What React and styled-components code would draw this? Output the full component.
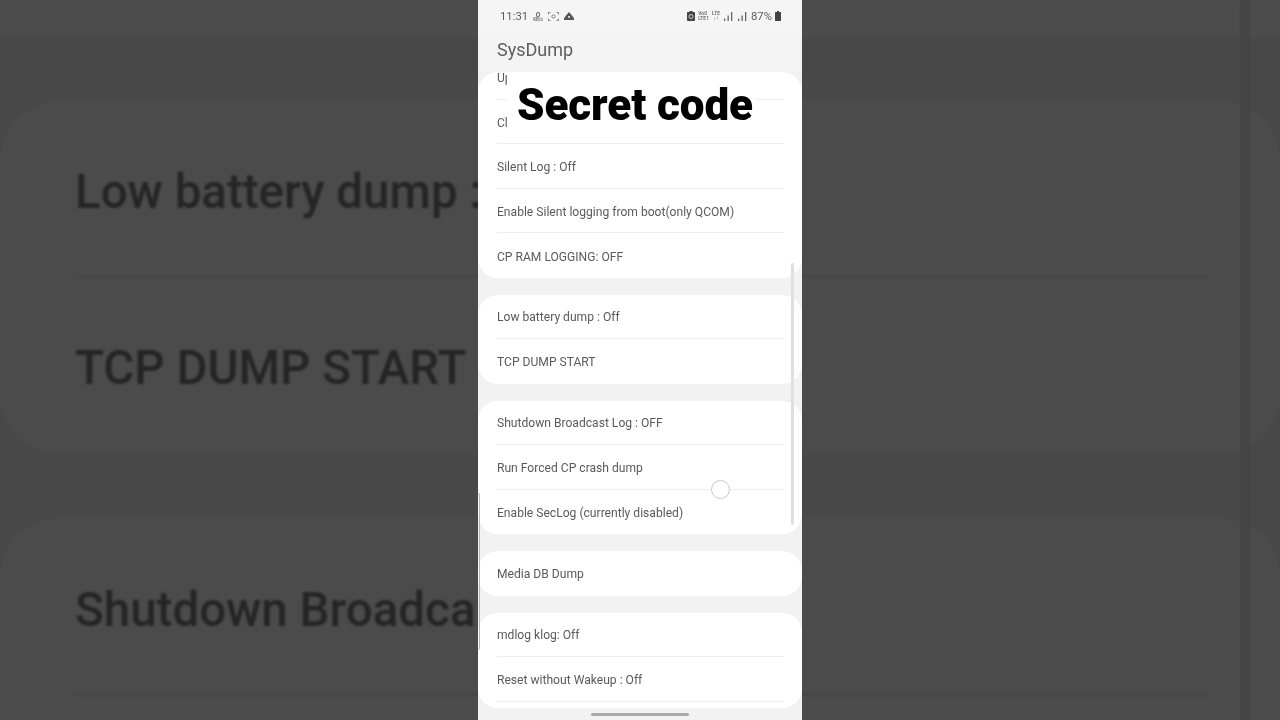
import styled, { createGlobalStyle } from 'styled-components';

const GlobalStyle = createGlobalStyle`
  html, body {
    margin: 0;
    padding: 0;
    background: #4b4b4b;
    overflow: hidden;
  }
`;

const Stage = styled.div`
  display: flex;
  width: 1280px;
  height: 720px;
  overflow: hidden;
  font-family: Roboto, sans-serif;
`;

// blurred, zoomed copy of the screen at each side of the video
const Side = styled.div`
  position: relative;
  flex: 1;
  min-width: 0;
  overflow: hidden;
  background: #484848;
`;

const SideTop = styled.div`
  height: 37px;
  margin-bottom: 64px;
  background: #4c4c4c;
`;

const SideCard = styled.div`
  height: ${(p) => p.$height}px;
  margin-bottom: 64px;
  background: #4b4b4b;
  border-radius: ${(p) => (p.$side === 'left' ? '60px 0 0 60px' : '0 60px 60px 0')};
`;

const SideRow = styled.div`
  display: flex;
  align-items: center;
  height: ${(p) => p.$height}px;
  padding-top: ${(p) => p.$shift || 0}px;
  margin: ${(p) => (p.$side === 'left' ? '0 0 0 75px' : '0 72px 0 0')};
  border-bottom: ${(p) => (p.$line ? '2px solid #444' : 'none')};
  box-sizing: border-box;
  color: #252525;
  font-size: 47.5px;
  font-weight: 500;
  white-space: nowrap;
  filter: blur(1.3px);
`;

const SideBar = styled.div`
  position: absolute;
  top: 0;
  bottom: 0;
  right: 30px;
  width: 10px;
  background: #444;
  filter: blur(1px);
`;

const Phone = styled.div`
  position: relative;
  flex: 0 0 324px;
  height: 720px;
  overflow: hidden;
  background: #f2f2f2;
  filter: blur(0.3px);
`;

const StatusBar = styled.div`
  display: flex;
  align-items: center;
  justify-content: space-between;
  height: 27px;
  padding: 5px 21px 0 22px;
  box-sizing: border-box;
  background: #f5f5f5;
  color: #5c5c5c;
  font-size: 11.3px;
`;

const StatusGroup = styled.div`
  display: flex;
  align-items: center;
  gap: ${(p) => p.$gap || 4}px;
`;

const Speed = styled.div`
  display: flex;
  flex-direction: column;
  align-items: center;
  font-size: 4.5px;
  line-height: 4px;
  font-weight: 500;

  b {
    font-size: 8px;
    line-height: 7px;
    font-weight: 500;
  }
`;

const NetLabel = styled.div`
  display: flex;
  flex-direction: column;
  align-items: ${(p) => p.$align || 'flex-start'};
  font-size: 5px;
  line-height: 5px;
  font-weight: 500;
`;

const TitleBar = styled.div`
  height: 45.4px;
  padding: 0 0 0 19px;
  display: flex;
  align-items: center;
  background: #f4f4f4;
`;

const AppTitle = styled.h1`
  margin: 0;
  font-size: 18px;
  font-weight: 400;
  color: #5e5e5e;
`;

const List = styled.div`
  display: flex;
  flex-direction: column;
  gap: 17px;
`;

const Card = styled.div`
  overflow: hidden;
  background: #fff;
  border-radius: 20px;
  padding-bottom: ${(p) => p.$pad || 0}px;
`;

const Row = styled.div`
  display: flex;
  align-items: center;
  height: 44.5px;
  padding-top: ${(p) => (p.$first ? 2 : 1)}px;
  margin: 0 18px 0 19px;
  margin-top: ${(p) => p.$clip || 0}px;
  box-sizing: border-box;
  border-bottom: ${(p) => (p.$line ? '1px solid #eeeeee' : 'none')};
  color: #5a5a5a;
  font-size: 12.1px;
  white-space: nowrap;
`;

const Headline = styled.div`
  position: absolute;
  top: 73px;
  left: 29px;
  width: 249px;
  height: 64px;
  padding: 0 0 0 10px;
  box-sizing: border-box;
  display: flex;
  align-items: center;
  background: #fff;
  color: #000;
  font-size: 44px;
  font-weight: 900;
  letter-spacing: -0.1px;
  white-space: nowrap;
`;

const ScrollThumb = styled.div`
  position: absolute;
  top: 263px;
  right: 8px;
  width: 3px;
  height: 262px;
  border-radius: 2px;
  background: #dfdfdf;
`;

const TouchDot = styled.div`
  position: absolute;
  top: 480px;
  left: 233px;
  width: 19px;
  height: 19px;
  box-sizing: border-box;
  border-radius: 50%;
  border: 1px solid #c9c9c9;
  background: #fff;
`;

const EdgeLine = styled.div`
  position: absolute;
  top: 493px;
  left: 0;
  width: 2px;
  height: 157px;
  box-sizing: border-box;
  border: 1px solid #b5b5b5;
  border-left: none;
  border-radius: 0 3px 3px 0;
`;

const HomeBar = styled.div`
  position: absolute;
  bottom: 4px;
  left: 113px;
  width: 98px;
  height: 3px;
  border-radius: 2px;
  background: #aaa;
`;

const ScreenIcon = () => (
  <svg width="11" height="9" viewBox="0 0 11 9" fill="none" stroke="#666" strokeWidth="0.8">
    <path d="M0.5 2.5V0.5H2.5M8.5 0.5H10.5V2.5M10.5 6.5V8.5H8.5M2.5 8.5H0.5V6.5" />
    <circle cx="5.5" cy="4.5" r="1.6" />
  </svg>
);

const ShareIcon = () => (
  <svg width="10" height="8" viewBox="0 0 10 8" fill="#555">
    <path d="M5 0L8 3.5L10 6.2V8H0V6.2L2 3.5Z" />
    <circle cx="5" cy="5" r="1" fill="#f5f5f5" />
  </svg>
);

const LockBattery = () => (
  <svg width="8" height="10" viewBox="0 0 8 10" fill="#444">
    <path d="M2.5 0H5.5V1H7.2C7.6 1 8 1.4 8 1.8V9.2C8 9.6 7.6 10 7.2 10H.8C.4 10 0 9.6 0 9.2V1.8C0 1.4 .4 1 .8 1H2.5Z" />
    <circle cx="4" cy="5.5" r="2" fill="none" stroke="#f5f5f5" strokeWidth="0.8" />
  </svg>
);

const Signal = () => (
  <svg width="11" height="9" viewBox="0 0 11 9" fill="#666">
    <rect x="1" y="6.5" width="1.3" height="2.5" />
    <rect x="4.5" y="3.5" width="1.3" height="5.5" />
    <rect x="8" y="0" width="1.3" height="9" />
  </svg>
);

const Battery = () => (
  <svg width="6" height="10" viewBox="0 0 6 10" fill="#444">
    <path d="M2 0H4V1H5.4C5.7 1 6 1.3 6 1.6V9.4C6 9.7 5.7 10 5.4 10H.6C.3 10 0 9.7 0 9.4V1.6C0 1.3 .3 1 .6 1H2Z" />
  </svg>
);

const sections = [
  ['Up', 'Cl', 'Silent Log : Off', 'Enable Silent logging from boot(only QCOM)', 'CP RAM LOGGING: OFF'],
  ['Low battery dump : Off', 'TCP DUMP START'],
  ['Shutdown Broadcast Log : OFF', 'Run Forced CP crash dump', 'Enable SecLog (currently disabled)'],
  ['Media DB Dump'],
  ['mdlog klog: Off', 'Reset without Wakeup : Off'],
];

function SidePanel({ side }) {
  const text = side === 'left';
  return (
    <Side>
      <SideTop />
      <SideCard $side={side} $height={353}>
        <SideRow $side={side} $height={177} $shift={7} $line>{text && 'Low battery dump :'}</SideRow>
        <SideRow $side={side} $height={176} $shift={4}>{text && 'TCP DUMP START'}</SideRow>
      </SideCard>
      <SideCard $side={side} $height={300}>
        <SideRow $side={side} $height={178} $shift={7} $line>{text && 'Shutdown Broadca'}</SideRow>
      </SideCard>
      {!text && <SideBar />}
    </Side>
  );
}

export default function App() {
  return (
    <Stage>
      <GlobalStyle />
      <SidePanel side="left" />
      <Phone>
        <StatusBar>
          <StatusGroup $gap={5}>
            <span>11:31</span>
            <Speed><b>0</b>KB/s</Speed>
            <ScreenIcon />
            <ShareIcon />
          </StatusGroup>
          <StatusGroup $gap={3}>
            <LockBattery />
            <NetLabel><span>Vo0</span><span>LTE1</span></NetLabel>
            <NetLabel $align="center"><span>LTE</span><span>↓↑</span></NetLabel>
            <Signal />
            <Signal />
            <span>87%</span>
            <Battery />
          </StatusGroup>
        </StatusBar>
        <TitleBar>
          <AppTitle>SysDump</AppTitle>
        </TitleBar>
        <List>
          {sections.map((rows, i) => (
            <Card key={i} $pad={i === sections.length - 1 ? 6 : 0}>
              {rows.map((label, j) => (
                <Row
                  key={label}
                  $first={i === 0}
                  $clip={i === 0 && j === 0 ? -17 : 0}
                  $line={j < rows.length - 1 || i === sections.length - 1}
                >
                  {label}
                </Row>
              ))}
            </Card>
          ))}
        </List>
        <Headline>Secret code</Headline>
        <ScrollThumb />
        <TouchDot />
        <EdgeLine />
        <HomeBar />
      </Phone>
      <SidePanel side="right" />
    </Stage>
  );
}
